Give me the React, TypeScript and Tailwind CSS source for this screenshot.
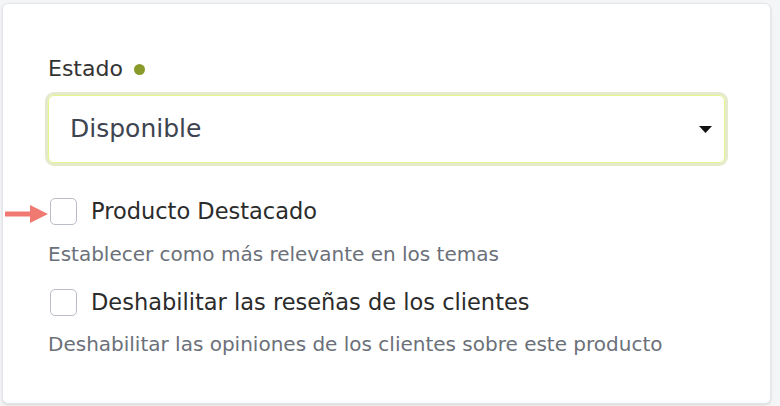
const FONT = "font-['DejaVu_Sans','Open_Sans',sans-serif]";

const Checkbox = () => (
  <span className="ml-[2px] block h-[27px] w-[27px] shrink-0 rounded-[5px] border border-[#b9bdc8] bg-white" />
);

const App = () => {
  return (
    <div className={`h-[406px] w-[780px] bg-[#f4f5f7] pl-[2px] pt-[3px] ${FONT}`}>
      <div className='relative h-[401px] w-[769px] rounded-md border border-[#e4e6ea] bg-white pl-[45px] pr-[45px] pt-[51px] shadow-sm'>
        <div className='flex h-[28px] items-center gap-[11px] text-[22px] leading-[28px] text-[#333]'>
          <span>Estado</span>
          <span className='h-[11px] w-[11px] rounded-full bg-[#8a9b2c]' />
        </div>

        <div className='mt-[12px] flex h-[68px] items-center justify-between rounded-[6px] border border-[#e6f48c] pl-[21px] pr-[12px] ring-[3px] ring-[#e6eacd]'>
          <span className='text-[25px] leading-[32px] text-[#3e4450]'>Disponible</span>
          <svg width='13' height='7' viewBox='0 0 13 7'>
            <path d='M0 0h13L6.5 7z' fill='#111' />
          </svg>
        </div>

        <div className='mt-[34px] flex h-[28px] items-center gap-[14px]'>
          <Checkbox />
          <span className='text-[22.5px] leading-[28px] text-[#2b2b2b]'>Producto Destacado</span>
        </div>
        <p className='mt-[16px] text-[20px] leading-[26px] text-[#6b7079]'>Establecer como más relevante en los temas</p>

        <div className='mt-[21px] flex h-[28px] items-center gap-[14px]'>
          <Checkbox />
          <span className='text-[22.5px] leading-[28px] text-[#2b2b2b]'>Deshabilitar las reseñas de los clientes</span>
        </div>
        <p className='mt-[15px] text-[20px] leading-[26px] text-[#6b7079]'>Deshabilitar las opiniones de los clientes sobre este producto</p>

        {/* pointer arrow */}
        <svg className='absolute left-[2px] top-[200px]' width='43' height='20' viewBox='0 0 43 20'>
          <path d='M0 7.5h25V1l18 9-18 9v-6.5H0z' fill='#f07a72' />
        </svg>
      </div>
    </div>
  );
};

export default App
